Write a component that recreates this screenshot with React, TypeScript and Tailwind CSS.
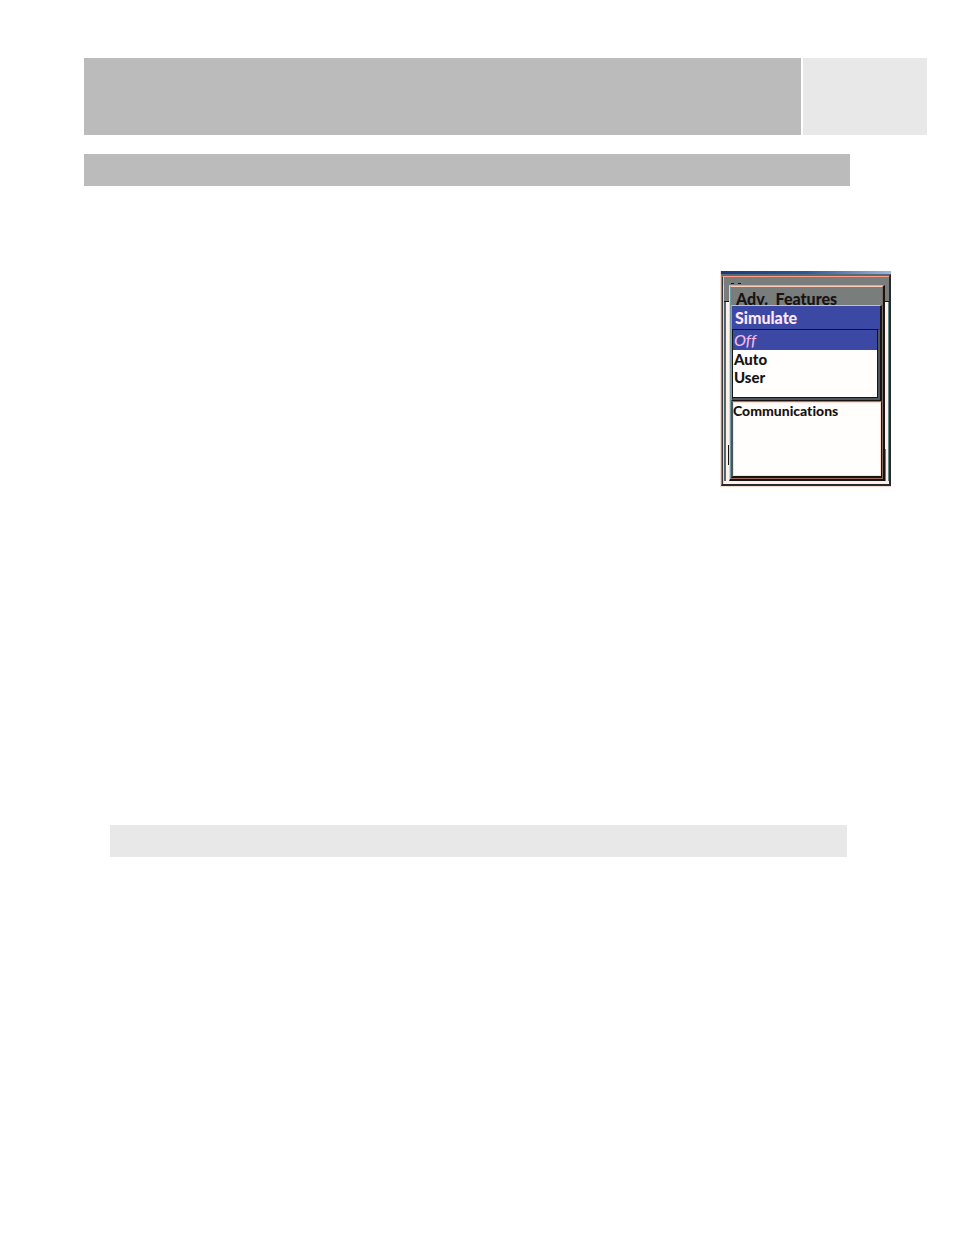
const modes = ["Off", "Auto", "User"];

function DeviceMenu() {
  return (
    <section
      aria-label="Advanced features menu"
      className="w-[171px] border-l border-[#f3ddd4] font-['Lato','Liberation_Sans',sans-serif] text-sm font-black text-[#181414] [font-variant-ligatures:none]"
    >
      <div className="h-[3px] bg-linear-to-r from-[#183a7c] via-[#2c5796] to-[#9db5df]" />

      {/* Menu window at the back, mostly hidden */}
      <div className="border-t-2 border-r-2 border-b-2 border-l border-t-[#596970] border-r-[#252b2e] border-b-[#252b2e] border-l-[#8a8b87]">
        <div className="border-t border-l border-t-[#ff9d86] border-l-[#33383a]">
          <div className="flex h-2 items-end gap-1 border-l border-[#ffb4a0] bg-[#797d7b] pb-px pl-[7px]">
            <span className="h-px w-[3px] bg-[#181414]" />
            <span className="h-px w-[3px] bg-[#181414]" />
          </div>

          <div className="flex border-l border-[#ffcbb9]">
            <div className="flex w-[5px] flex-col">
              <div className="h-[17px] border-b border-[#181414] bg-[#797d7b]" />
              <div className="flex flex-1 flex-col items-end justify-end border-l-2 border-[#53666c] bg-[#fff0ea] pb-4">
                <span className="h-5 w-px bg-[#181414]" />
              </div>
            </div>

            {/* Adv. Features window */}
            <div className="flex-1 border-t border-r-2 border-b-2 border-l border-t-[#82c9d2] border-r-[#181414] border-b-[#181414] border-l-[#ffcbb9]">
              <div className="border-t border-r border-b border-l border-t-[#ffcbb9] border-r-[#7a6b66] border-b-[#9b6c60] border-l-[#6f99a1] bg-[#797d7b]">
                <h2 className="h-[18px] pl-[5px] text-base leading-6">Adv.&nbsp; Features</h2>

                {/* Simulate window */}
                <div className="border-t border-r-2 border-b border-l border-t-[#9dcde5] border-r-[#181414] border-b-[#181414] border-l-[#8a9da6] bg-[#3b49a5]">
                  <h3 className="h-[23px] pl-[3px] text-base leading-6 text-[#ffe6f8]">Simulate</h3>
                  <div className="border-t border-r-2 border-b-2 border-l border-t-[#181414] border-r-[#51555c] border-b-[#51555c] border-l-[#181414]">
                    <ul className="h-[68px] border-r border-b border-[#181414] bg-[#fffefd]">
                      {modes.map((mode) => (
                        <li key={mode}>
                          <button
                            type="button"
                            aria-pressed={mode === "Off"}
                            className="block h-[18px] w-full pl-px text-left text-[15px] leading-[18px] aria-pressed:h-5 aria-pressed:bg-[#3b49a5] aria-pressed:text-base aria-pressed:font-medium aria-pressed:leading-5 aria-pressed:text-[#f3b8e9] aria-pressed:italic"
                          >
                            {mode}
                          </button>
                        </li>
                      ))}
                    </ul>
                  </div>
                </div>

                <div className="h-[77px] border-t border-r border-b-2 border-l-2 border-t-[#6d8689] border-r-[#181414] border-b-[#181414] border-l-[#48565a] bg-[#fffefd] shadow-[inset_0_0_0_1px_#ffded3]">
                  <button type="button" className="block w-full text-left leading-[18px]">
                    Communications
                  </button>
                </div>
              </div>
            </div>

            <div className="flex w-1 flex-col">
              <div className="h-[17px] border-b border-[#181414] bg-[#797d7b]" />
              <div className="flex flex-1 flex-col justify-end border-r border-[#68878b] bg-[#fff0ea]">
                <span className="h-8 w-px bg-[#71787a]" />
              </div>
            </div>
          </div>
          <div className="h-[3px] border-l border-[#ffcbb9] bg-[#fff0ea]" />
        </div>
      </div>
      <div className="h-px bg-[#f3ddd4]" />
    </section>
  );
}

export default function App() {
  return (
    <main className="min-h-screen bg-white pt-[58px] pr-[27px] pb-10 pl-[84px]">
      <header className="flex gap-[2px]">
        <div className="h-[77px] flex-1 bg-[#bbbbbb]" />
        <div className="h-[77px] w-[124px] bg-[#e8e8e8]" />
      </header>
      <div className="mt-[19px] mr-[77px] h-8 bg-[#bbbbbb]" />
      <div className="mt-[85px] mr-9 flex justify-end">
        <DeviceMenu />
      </div>
      <div className="mt-[338px] mr-20 ml-[26px] h-8 bg-[#e8e8e8]" />
    </main>
  );
}
